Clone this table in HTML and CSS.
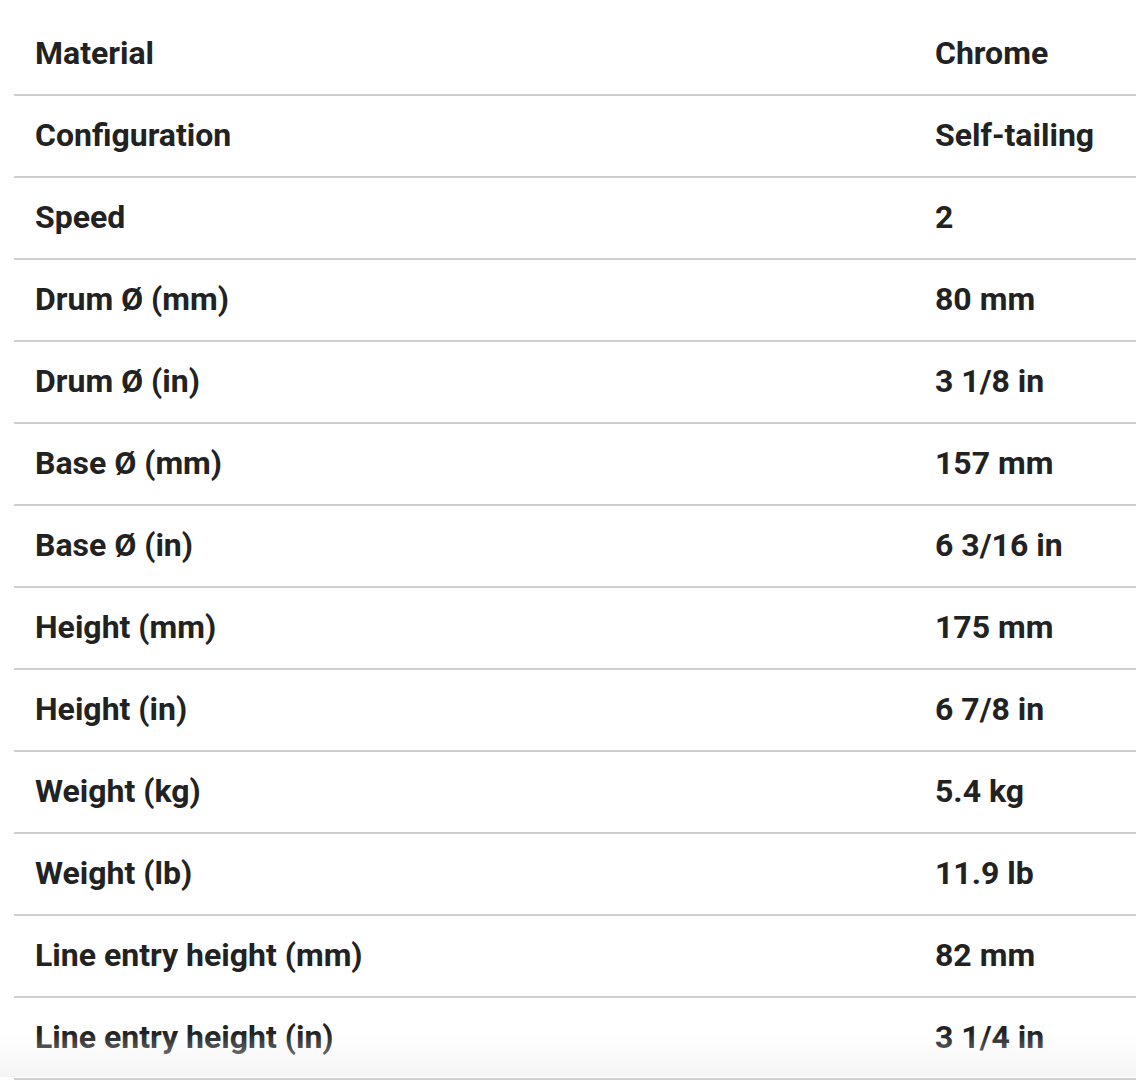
FILE: index.html
```html
<!DOCTYPE html>
<html lang="en">
<head>
<meta charset="utf-8">
<title>Specifications</title>
<link rel="stylesheet" href="styles.css">
</head>
<body>
<div class="page">
  <table class="specs">
    <tbody>
      <tr><th>Material</th><td>Chrome</td></tr>
      <tr><th>Configuration</th><td>Self-tailing</td></tr>
      <tr><th>Speed</th><td>2</td></tr>
      <tr><th>Drum Ø (mm)</th><td>80 mm</td></tr>
      <tr><th>Drum Ø (in)</th><td>3 1/8 in</td></tr>
      <tr><th>Base Ø (mm)</th><td>157 mm</td></tr>
      <tr><th>Base Ø (in)</th><td>6 3/16 in</td></tr>
      <tr><th>Height (mm)</th><td>175 mm</td></tr>
      <tr><th>Height (in)</th><td>6 7/8 in</td></tr>
      <tr><th>Weight (kg)</th><td>5.4 kg</td></tr>
      <tr><th>Weight (lb)</th><td>11.9 lb</td></tr>
      <tr><th>Line entry height (mm)</th><td>82 mm</td></tr>
      <tr><th>Line entry height (in)</th><td>3 1/4 in</td></tr>
    </tbody>
  </table>
  <div class="fade"></div>
</div>
</body>
</html>
```

FILE: styles.css
```css
html, body {
  margin: 0;
  padding: 0;
  background: #ffffff;
}
.page {
  position: relative;
  padding: 14px 0 0 14px;
  border-top: 1px dotted #f0f0f0;
  margin-top: -1px;
  height: 1082px;
  box-sizing: border-box;
  overflow: hidden;
}
.specs {
  width: 100%;
  border-collapse: collapse;
  font-family: Roboto, "Liberation Sans", sans-serif;
  font-weight: 700;
  font-size: 32px;
  color: #222222;
}
.specs th,
.specs td {
  height: 78px;
  padding: 0 0 2px 21px;
  text-align: left;
  vertical-align: middle;
  font-weight: 700;
  border-bottom: 2px solid #cfcfcf;
  line-height: 1;
}
.specs th {
  width: 879px;
}
.fade {
  position: absolute;
  left: 0;
  right: 0;
  bottom: 4px;
  height: 44px;
  background: linear-gradient(to bottom, rgba(240,240,240,0), rgba(240,240,240,0.7));
  pointer-events: none;
}
```
